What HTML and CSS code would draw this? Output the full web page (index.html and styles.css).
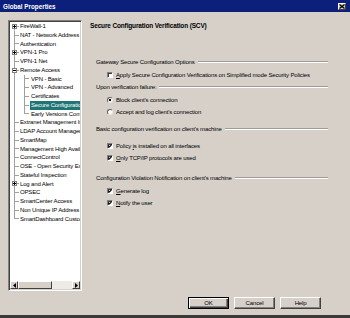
FILE: index.html
```html
<!DOCTYPE html>
<html lang="en">
<head>
    <meta charset="UTF-8">
    <meta name="viewport" content="width=device-width, initial-scale=1.0">
    <title>Global Properties</title>
    <link rel="stylesheet" href="styles.css">
</head>
<body>
    <div class="dialog">
        <div class="titlebar">
            <span class="title">Global Properties</span>
            <span class="close-btn">
                <svg width="6" height="5" viewBox="0 0 6 5"><path d="M0.5 0.5 L5.5 4.5 M5.5 0.5 L0.5 4.5" stroke="#000" stroke-width="1.3"/></svg>
            </span>
        </div>

        <div class="content">
            <!-- left navigation tree -->
            <div class="tree">
                <div class="nodes">
                    <div class="row first"><span class="box plus"></span><span class="label">FireWall-1</span></div>
                    <div class="row"><span class="label">NAT - Network Address Translation</span></div>
                    <div class="row"><span class="label">Authentication</span></div>
                    <div class="row"><span class="box plus"></span><span class="label">VPN-1 Pro</span></div>
                    <div class="row"><span class="label">VPN-1 Net</span></div>
                    <div class="row"><span class="box minus"></span><span class="label">Remote Access</span></div>
                    <div class="row kid"><span class="label">VPN - Basic</span></div>
                    <div class="row kid"><span class="label">VPN - Advanced</span></div>
                    <div class="row kid"><span class="label">Certificates</span></div>
                    <div class="row kid"><span class="label sel">Secure Configuration Verification (SCV)</span></div>
                    <div class="row kid kid-last"><span class="label">Early Versions Compatibility</span></div>
                    <div class="row"><span class="label">Extranet Management Interface</span></div>
                    <div class="row"><span class="label">LDAP Account Management</span></div>
                    <div class="row"><span class="label">SmartMap</span></div>
                    <div class="row"><span class="label">Management High Availability</span></div>
                    <div class="row"><span class="label">ConnectControl</span></div>
                    <div class="row"><span class="label">OSE - Open Security Extension</span></div>
                    <div class="row"><span class="label">Stateful Inspection</span></div>
                    <div class="row"><span class="box plus"></span><span class="label">Log and Alert</span></div>
                    <div class="row"><span class="label">OPSEC</span></div>
                    <div class="row"><span class="label">SmartCenter Access</span></div>
                    <div class="row"><span class="label">Non Unique IP Address Ranges</span></div>
                    <div class="row last"><span class="label">SmartDashboard Customization</span></div>
                </div>
                <div class="hscroll">
                    <span class="sb-btn"><svg width="3" height="5" viewBox="0 0 3 5"><polygon points="3,0 0,2.5 3,5" fill="#000"/></svg></span>
                    <span class="sb-thumb"></span>
                    <span class="sb-track"></span>
                    <span class="sb-btn"><svg width="3" height="5" viewBox="0 0 3 5"><polygon points="0,0 3,2.5 0,5" fill="#000"/></svg></span>
                </div>
            </div>

            <!-- settings page -->
            <div class="page">
                <h1 class="page-title">Secure Configuration Verification (SCV)</h1>

                <div class="group g1">
                    <div class="group-head">Gateway Secure Configuration Options</div>
                    <div class="opts">
                        <div class="opt"><span class="check"></span><span><u>A</u>pply Secure Configuration Verifications on Simplified mode Security Policies</span></div>
                    </div>
                </div>

                <div class="group g2">
                    <div class="group-head">Upon verification failure:</div>
                    <div class="opts">
                        <div class="opt"><span class="radio on"></span><span>Block client's connection</span></div>
                        <div class="opt"><span class="radio"></span><span>Accept and log client's connection</span></div>
                    </div>
                </div>

                <div class="group g3">
                    <div class="group-head">Basic configuration verification on client's machine</div>
                    <div class="opts">
                        <div class="opt"><span class="check on"><svg width="4" height="4" viewBox="0 0 4 4"><path d="M0.3 1.6 L1.5 2.9 L3.7 0.5" fill="none" stroke="#000" stroke-width="1.1"/></svg></span><span>Policy <u>i</u>s installed on all interfaces</span></div>
                        <div class="opt"><span class="check on"><svg width="4" height="4" viewBox="0 0 4 4"><path d="M0.3 1.6 L1.5 2.9 L3.7 0.5" fill="none" stroke="#000" stroke-width="1.1"/></svg></span><span><u>O</u>nly TCP/IP protocols are used</span></div>
                    </div>
                </div>

                <div class="group g4">
                    <div class="group-head">Configuration Violation Notification on client's machine</div>
                    <div class="opts">
                        <div class="opt"><span class="check on"><svg width="4" height="4" viewBox="0 0 4 4"><path d="M0.3 1.6 L1.5 2.9 L3.7 0.5" fill="none" stroke="#000" stroke-width="1.1"/></svg></span><span><u>G</u>enerate log</span></div>
                        <div class="opt"><span class="check on"><svg width="4" height="4" viewBox="0 0 4 4"><path d="M0.3 1.6 L1.5 2.9 L3.7 0.5" fill="none" stroke="#000" stroke-width="1.1"/></svg></span><span><u>N</u>otify the user</span></div>
                    </div>
                </div>
            </div>
        </div>

        <div class="buttons">
            <button class="btn default">OK</button>
            <button class="btn">Cancel</button>
            <button class="btn">Help</button>
        </div>
    </div>
</body>
</html>
```

FILE: styles.css
```css
body {
    margin: 0;
    font-family: "Liberation Sans", Arial, sans-serif;
    font-size: 6px;
    letter-spacing: -0.15px;
    color: #000000;
    background: #d6d0c9;
}
.dialog {
    width: 350px;
    height: 318px;
    box-sizing: border-box;
    border-bottom: 3px solid #3c3a38;
    background: #d6d0c9;
    display: flex;
    flex-direction: column;
}

/* title bar */
.titlebar {
    height: 12px;
    flex-shrink: 0;
    background: #0c1f7a;
    color: #ffffff;
    display: flex;
    align-items: center;
    justify-content: space-between;
    padding: 0 4px 0 3px;
}
.title {
    font-weight: bold;
    font-size: 6.3px;
    letter-spacing: 0;
}
.close-btn {
    width: 8px;
    height: 7px;
    box-sizing: border-box;
    background: #d6d0c9;
    border: 1px solid;
    border-color: #ffffff #404040 #404040 #ffffff;
    display: flex;
    align-items: center;
    justify-content: center;
}

.content {
    display: flex;
    gap: 8px;
    height: 279px;
    padding: 8px 0 0 8px;
    box-sizing: border-box;
}

/* tree */
.tree {
    width: 74px;
    box-sizing: border-box;
    border: 1px solid;
    border-color: #808080 #ffffff #ffffff #808080;
    box-shadow: inset 1px 1px #404040, inset -1px -1px #d6d0c9;
    padding: 1px;
    background: #ffffff;
    display: flex;
    flex-direction: column;
}
.nodes {
    flex: 1;
    overflow: hidden;
}
.row {
    height: 8.75px;
    display: flex;
    align-items: center;
    padding-left: 10px;
    white-space: nowrap;
    background:
        linear-gradient(#a0a0a0, #a0a0a0) 4px 0 / 1px 100% no-repeat,
        linear-gradient(#a0a0a0, #a0a0a0) 4px 50% / 5px 1px no-repeat;
}
.row.first {
    background:
        linear-gradient(#a0a0a0, #a0a0a0) 4px 100% / 1px 50% no-repeat,
        linear-gradient(#a0a0a0, #a0a0a0) 4px 50% / 5px 1px no-repeat;
}
.row.last {
    background:
        linear-gradient(#a0a0a0, #a0a0a0) 4px 0 / 1px 50% no-repeat,
        linear-gradient(#a0a0a0, #a0a0a0) 4px 50% / 5px 1px no-repeat;
}
.row.kid {
    padding-left: 21px;
    background:
        linear-gradient(#a0a0a0, #a0a0a0) 4px 0 / 1px 100% no-repeat,
        linear-gradient(#a0a0a0, #a0a0a0) 14px 0 / 1px 100% no-repeat,
        linear-gradient(#a0a0a0, #a0a0a0) 14px 50% / 5px 1px no-repeat;
}
.row.kid-last {
    background:
        linear-gradient(#a0a0a0, #a0a0a0) 4px 0 / 1px 100% no-repeat,
        linear-gradient(#a0a0a0, #a0a0a0) 14px 0 / 1px 50% no-repeat,
        linear-gradient(#a0a0a0, #a0a0a0) 14px 50% / 5px 1px no-repeat;
}
.row .box {
    width: 5px;
    height: 5px;
    box-sizing: border-box;
    border: 1px solid #808080;
    margin: 0 3px 0 -8px;
    flex-shrink: 0;
}
.box.plus {
    background:
        linear-gradient(#000, #000) center / 3px 1px no-repeat,
        linear-gradient(#000, #000) center / 1px 3px no-repeat,
        #ffffff;
}
.box.minus {
    background:
        linear-gradient(#000, #000) center / 3px 1px no-repeat,
        #ffffff;
}
.label {
    padding: 0 1px;
    margin-left: -1px;
    line-height: 8.75px;
}
.label.sel {
    background: #1f7474;
    color: #ffffff;
}

.hscroll {
    height: 8px;
    display: flex;
}
.sb-btn,
.sb-thumb {
    box-sizing: border-box;
    background: #d6d0c9;
    border: 1px solid;
    border-color: #ffffff #404040 #404040 #ffffff;
}
.sb-btn {
    width: 8px;
    display: flex;
    align-items: center;
    justify-content: center;
}
.sb-thumb {
    width: 34px;
}
.sb-track {
    flex: 1;
    background: #eeeae6;
}

/* page */
.page {
    width: 238px;
}
.page-title {
    margin: 2px 0 0;
    font-size: 6.5px;
    font-weight: bold;
    line-height: 8px;
}
.group-head {
    display: flex;
    align-items: center;
    gap: 3px;
    margin-left: 6px;
    line-height: 8px;
    white-space: nowrap;
}
.group-head::after {
    content: "";
    flex: 1;
    border-top: 1px solid #a09b94;
    border-bottom: 1px solid #ffffff;
}
.g1 { margin-top: 28px; }
.g2 { margin-top: 4px; }
.g3 { margin-top: 9px; }
.g4 { margin-top: 12px; }
.opts {
    display: flex;
    flex-direction: column;
    gap: 4px;
    margin-top: 5px;
    padding-left: 17px;
}
.g3 .opts {
    margin-top: 9px;
}
.opt {
    display: flex;
    align-items: center;
    gap: 3px;
    line-height: 8px;
    white-space: nowrap;
}
.check {
    width: 6px;
    height: 6px;
    box-sizing: border-box;
    background: #ffffff;
    border: 1px solid;
    border-color: #808080 #ffffff #ffffff #808080;
    box-shadow: inset 1px 1px #404040;
    display: flex;
    align-items: center;
    justify-content: center;
    flex-shrink: 0;
}
.radio {
    width: 6px;
    height: 6px;
    box-sizing: border-box;
    border-radius: 50%;
    background: #ffffff;
    border: 1px solid;
    border-color: #606060 #e8e4e0 #e8e4e0 #606060;
    flex-shrink: 0;
}
.radio.on {
    background: radial-gradient(circle, #000000 0 1px, #ffffff 1.3px);
}
u {
    text-decoration-thickness: 1px;
}

/* buttons */
.buttons {
    display: flex;
    justify-content: flex-end;
    gap: 5px;
    margin-top: 6px;
    padding-right: 29px;
}
.btn {
    width: 41px;
    height: 12px;
    padding: 0;
    font: inherit;
    letter-spacing: -0.15px;
    color: #000000;
    background: #d6d0c9;
    border: 1px solid;
    border-color: #ffffff #404040 #404040 #ffffff;
    box-shadow: inset -1px -1px #808080;
}
.btn.default {
    border-color: #000000;
    box-shadow: inset 1px 1px #ffffff, inset -1px -1px #404040, inset -2px -2px #808080;
}
```
